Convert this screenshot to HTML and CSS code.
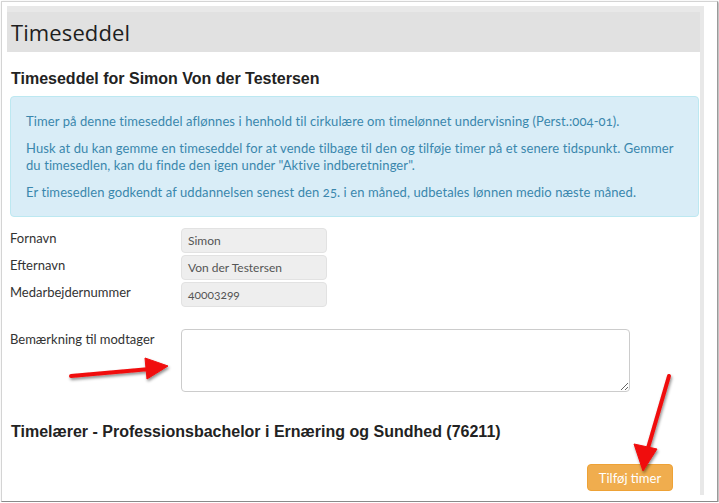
FILE: index.html
```html
<!DOCTYPE html>
<html lang="da">
    <head>
        <meta charset="utf-8">
        <title>Timeseddel</title>
        <link rel="stylesheet" href="styles.css">
    </head>
    <body>
        <div class="shot">
            <div class="page">
                <div class="page-header">
                    <h1>Timeseddel</h1>
                </div>
                <div class="content">
                    <h3 class="section-title first">Timeseddel for Simon Von der Testersen</h3>
                    <div class="info-box">
                        <p>Timer på denne timeseddel aflønnes i henhold til cirkulære om timelønnet undervisning (Perst.:004-01).</p>
                        <p>Husk at du kan gemme en timeseddel for at vende tilbage til den og tilføje timer på et senere tidspunkt. Gemmer du timesedlen, kan du finde den igen under "Aktive indberetninger".</p>
                        <p>Er timesedlen godkendt af uddannelsen senest den 25. i en måned, udbetales lønnen medio næste måned.</p>
                    </div>
                    <div class="form-rows">
                        <div class="form-row">
                            <label class="form-label">Fornavn</label>
                            <div class="form-input">Simon</div>
                        </div>
                        <div class="form-row">
                            <label class="form-label">Efternavn</label>
                            <div class="form-input">Von der Testersen</div>
                        </div>
                        <div class="form-row">
                            <label class="form-label">Medarbejdernummer</label>
                            <div class="form-input">40003299</div>
                        </div>
                    </div>
                    <div class="form-row remark-row">
                        <label class="form-label">Bemærkning til modtager</label>
                        <textarea class="remark"></textarea>
                    </div>
                    <h3 class="section-title second">Timelærer - Professionsbachelor i Ernæring og Sundhed (76211)</h3>
                    <div class="actions">
                        <button class="add-btn">Tilføj timer</button>
                    </div>
                </div>
            </div>
            <!-- annotations on top of the screenshot -->
            <svg class="arrows" width="719" height="503" viewBox="0 0 719 503">
                <defs>
                    <filter id="shadow" x="-20%" y="-20%" width="140%" height="140%">
                        <feDropShadow dx="1" dy="2" stdDeviation="1.5" flood-color="#000" flood-opacity="0.45"/>
                    </filter>
                </defs>
                <g filter="url(#shadow)" fill="#f00c0c" stroke="#f00c0c">
                    <line x1="71" y1="376" x2="150" y2="369" stroke-width="4" stroke-linecap="round"/>
                    <polygon points="145,358 168,366 147,379" stroke-width="1" stroke-linejoin="round"/>
                    <line x1="669" y1="376" x2="648" y2="448" stroke-width="4" stroke-linecap="round"/>
                    <polygon points="634,444 643,471 657,449" stroke-width="1" stroke-linejoin="round"/>
                </g>
            </svg>
        </div>
    </body>
</html>
```

FILE: styles.css
```css
html, body {
    margin: 0;
    padding: 0;
    background: #fff;
}
* {
    box-sizing: border-box;
}
.shot {
    position: relative;
    width: 717px;
    height: 501px;
    margin: 1px 0 0 1px;
    padding: 4px 0 0 5px;
    border: 1px solid #d4d4d4;
    border-right-color: #9a9a9a;
    border-bottom-color: #8a8a8a;
    box-shadow: 1px 1px 2px rgba(0, 0, 0, 0.35);
}
.page {
    width: 697px;
    height: 489px;
    border-top: 6px solid #e8e8e8;
    border-right: 4px solid #e8e8e8;
    background: #fff;
}
.page-header {
    height: 40px;
    background: #e1e1e1;
    padding: 0 4px;
    display: flex;
    align-items: center;
}
.page-header h1 {
    margin: 0;
    font-family: "Open Sans", "Noto Sans", sans-serif;
    font-weight: normal;
    font-size: 22px;
    color: #1e1e1e;
    letter-spacing: 0.1px;
}
.content {
    padding: 0 1px 0 3px;
}
.section-title {
    margin: 0;
    padding-left: 1px;
    font-family: "Liberation Sans", Arial, sans-serif;
    font-weight: bold;
    font-size: 16px;
    line-height: 20px;
    color: #222;
}
.section-title.first {
    margin: 17px 0 7px 0;
}
.section-title.second {
    margin: 30px 0 22px 0;
}
.info-box {
    background: #d9edf7;
    border: 1px solid #bce8f1;
    border-radius: 4px;
    padding: 16px 15px 15px 15px;
    color: #3a87ad;
    font-family: Lato, "Open Sans", sans-serif;
    font-variant-numeric: oldstyle-nums;
    font-size: 13px;
    letter-spacing: 0.09px;
    line-height: 17px;
}
.info-box p {
    margin: 0 0 10px 0;
}
.info-box p:last-child {
    margin-bottom: 0;
}
.form-rows {
    margin-top: 11px;
    display: flex;
    flex-direction: column;
    gap: 2px;
}
.form-row {
    display: flex;
    align-items: flex-start;
}
.form-label {
    width: 171px;
    padding-top: 2px;
    font-family: Lato, "Open Sans", sans-serif;
    font-size: 13px;
    line-height: 17px;
    color: #333;
}
.form-input {
    width: 146px;
    height: 25px;
    padding: 0 6px;
    background: #eee;
    border: 1px solid #e2e2e2;
    border-radius: 4px;
    font-family: Lato, "Open Sans", sans-serif;
    font-variant-numeric: oldstyle-nums;
    font-size: 12px;
    line-height: 24px;
    color: #555;
}
.remark-row {
    margin-top: 22px;
}
.remark {
    width: 449px;
    height: 63px;
    margin: 0;
    border: 1px solid #ccc;
    border-radius: 4px;
    background: #fff;
}
.actions {
    display: flex;
    justify-content: flex-end;
    padding-right: 26px;
}
.add-btn {
    width: 86px;
    height: 27px;
    background: #f0ad4e;
    border: 1px solid #eea236;
    border-radius: 4px;
    color: #fff;
    font-family: Lato, "Open Sans", sans-serif;
    font-size: 13px;
    padding: 0;
}
.arrows {
    position: absolute;
    left: -2px;
    top: -2px;
}
```
